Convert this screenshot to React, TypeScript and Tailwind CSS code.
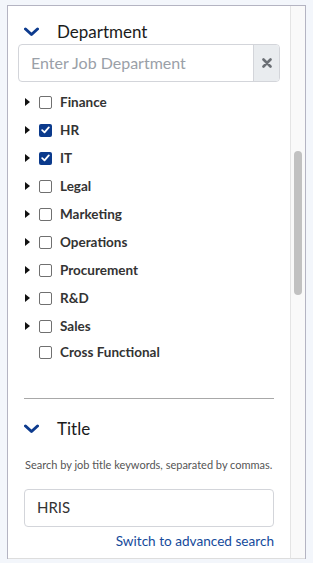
const departments = [
  { name: "Finance", checked: false, caret: true },
  { name: "HR", checked: true, caret: true },
  { name: "IT", checked: true, caret: true },
  { name: "Legal", checked: false, caret: true },
  { name: "Marketing", checked: false, caret: true },
  { name: "Operations", checked: false, caret: true },
  { name: "Procurement", checked: false, caret: true },
  { name: "R&D", checked: false, caret: true },
  { name: "Sales", checked: false, caret: true },
  { name: "Cross Functional", checked: false, caret: false },
];

const Chevron = () => (
  <svg width="15" height="10" viewBox="0 0 15 10" className="shrink-0">
    <path d="M1.5 2 L7.5 7.5 L13.5 2" fill="none" stroke="#0d3b8e" strokeWidth="3" strokeLinecap="round" strokeLinejoin="round" />
  </svg>
);

const Caret = ({ show }: { show: boolean }) => (
  <span className="w-[14px] flex items-center">
    {show && (
      <svg width="5" height="8" viewBox="0 0 5 8">
        <path d="M0 0 L5 4 L0 8 Z" fill="#111" />
      </svg>
    )}
  </span>
);

const Checkbox = ({ checked }: { checked: boolean }) =>
  checked ? (
    <span className="w-[13px] h-[13px] rounded-[2px] bg-[#0b3a8c] flex items-center justify-center shrink-0">
      <svg width="9" height="8" viewBox="0 0 9 8">
        <path d="M1.2 4.2 L3.5 6.3 L7.8 1.4" fill="none" stroke="#fff" strokeWidth="1.8" strokeLinecap="round" strokeLinejoin="round" />
      </svg>
    </span>
  ) : (
    <span className="w-[13px] h-[13px] rounded-[2px] border border-[#707070] bg-white shrink-0" />
  );

const App = () => {
  return (
    <div
      className="min-h-screen bg-[#f3f6fb] pt-[5px] pl-[7px]"
      style={{ fontFamily: "Lato, 'Open Sans', sans-serif" }}
    >
      <div className="w-[299px] h-[554px] bg-white border-l border-r border-t border-[#b4b4c2] flex">
        <div className="flex-1 flex flex-col border-b border-[#dddddd]">
          <div className="flex items-center h-[38px] pt-[13px] pl-[16px]">
            <Chevron />
            <span className="ml-[18px] text-[17px] text-[#1b1b1b]">Department</span>
          </div>
          <div className="mx-[10px] h-[38px] flex border border-[#d3d5da] rounded-[4px] overflow-hidden">
            <div className="flex-1 flex items-center pl-[12px] text-[16px] text-[#9aa0a8]">
              Enter Job Department
            </div>
            <div className="w-[26px] bg-[#e9ecef] border-l border-[#d3d5da] flex items-center justify-center">
              <svg width="10" height="10" viewBox="0 0 10 10">
                <path d="M1.5 1.5 L8.5 8.5 M8.5 1.5 L1.5 8.5" stroke="#6b6f75" strokeWidth="2.6" strokeLinecap="round" />
              </svg>
            </div>
          </div>
          <div className="flex flex-col mt-[6px] pl-[17px]">
            {departments.map((d) => (
              <div key={d.name} className="flex items-center h-[28px] last:h-[24px]">
                <Caret show={d.caret} />
                <Checkbox checked={d.checked} />
                <span className="ml-[8px] text-[13.5px] font-bold text-[#333]">{d.name}</span>
              </div>
            ))}
          </div>
          <div className="mx-[16px] mt-[34px] border-t border-[#a8a8a8]" />
          <div className="flex items-center h-[30px] mt-[15px] pl-[16px]">
            <Chevron />
            <span className="ml-[18px] text-[17px] text-[#1b1b1b]">Title</span>
          </div>
          <p className="mt-[13px] pl-[17px] text-[11px] text-[#555]">
            Search by job title keywords, separated by commas.
          </p>
          <div className="mx-[16px] mt-[15px] h-[38px] flex items-center border border-[#d3d5da] rounded-[4px] pl-[12px] text-[15px] text-[#333]">
            HRIS
          </div>
          <div className="mx-[16px] mt-[4px] text-right text-[13.6px] text-[#154a9b]">
            Switch to advanced search
          </div>
        </div>
        <div className="w-[15px] bg-[#f9f9f9] border-l border-[#e4e4e4] border-b border-b-[#dddddd] flex justify-center">
          <div className="w-[8px] h-[144px] mt-[145px] rounded-full bg-[#c1c1c1]" />
        </div>
      </div>
    </div>
  );
};

export default App;
